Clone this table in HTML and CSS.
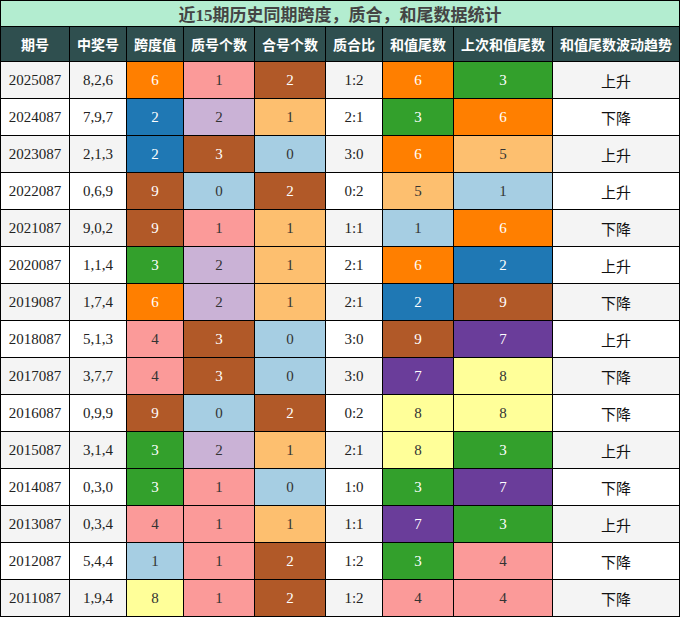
FILE: index.html
```html
<!DOCTYPE html>
<html lang="zh">
<head>
<meta charset="utf-8">
<link rel="stylesheet" href="styles.css">
</head>
<body>
<div class="grid">
  <div class="title">近15期历史同期跨度，质合，和尾数据统计</div>
  <div class="th">期号</div><div class="th">中奖号</div><div class="th">跨度值</div><div class="th">质号个数</div><div class="th">合号个数</div><div class="th">质合比</div><div class="th">和值尾数</div><div class="th">上次和值尾数</div><div class="th">和值尾数波动趋势</div>

  <div class="td g">2025087</div><div class="td g">8,2,6</div><div class="td c-or">6</div><div class="td c-pk">1</div><div class="td c-br">2</div><div class="td g">1:2</div><div class="td c-or">6</div><div class="td c-gr">3</div><div class="td g tr">上升</div>
  <div class="td">2024087</div><div class="td">7,9,7</div><div class="td c-bl">2</div><div class="td c-lp">2</div><div class="td c-lo">1</div><div class="td">2:1</div><div class="td c-gr">3</div><div class="td c-or">6</div><div class="td tr">下降</div>
  <div class="td g">2023087</div><div class="td g">2,1,3</div><div class="td c-bl">2</div><div class="td c-br">3</div><div class="td c-lb">0</div><div class="td g">3:0</div><div class="td c-or">6</div><div class="td c-lo">5</div><div class="td g tr">上升</div>
  <div class="td">2022087</div><div class="td">0,6,9</div><div class="td c-br">9</div><div class="td c-lb">0</div><div class="td c-br">2</div><div class="td">0:2</div><div class="td c-lo">5</div><div class="td c-lb">1</div><div class="td tr">上升</div>
  <div class="td g">2021087</div><div class="td g">9,0,2</div><div class="td c-br">9</div><div class="td c-pk">1</div><div class="td c-lo">1</div><div class="td g">1:1</div><div class="td c-lb">1</div><div class="td c-or">6</div><div class="td g tr">下降</div>
  <div class="td">2020087</div><div class="td">1,1,4</div><div class="td c-gr">3</div><div class="td c-lp">2</div><div class="td c-lo">1</div><div class="td">2:1</div><div class="td c-or">6</div><div class="td c-bl">2</div><div class="td tr">上升</div>
  <div class="td g">2019087</div><div class="td g">1,7,4</div><div class="td c-or">6</div><div class="td c-lp">2</div><div class="td c-lo">1</div><div class="td g">2:1</div><div class="td c-bl">2</div><div class="td c-br">9</div><div class="td g tr">下降</div>
  <div class="td">2018087</div><div class="td">5,1,3</div><div class="td c-pk">4</div><div class="td c-br">3</div><div class="td c-lb">0</div><div class="td">3:0</div><div class="td c-br">9</div><div class="td c-pu">7</div><div class="td tr">上升</div>
  <div class="td g">2017087</div><div class="td g">3,7,7</div><div class="td c-pk">4</div><div class="td c-br">3</div><div class="td c-lb">0</div><div class="td g">3:0</div><div class="td c-pu">7</div><div class="td c-ye">8</div><div class="td g tr">下降</div>
  <div class="td">2016087</div><div class="td">0,9,9</div><div class="td c-br">9</div><div class="td c-lb">0</div><div class="td c-br">2</div><div class="td">0:2</div><div class="td c-ye">8</div><div class="td c-ye">8</div><div class="td tr">下降</div>
  <div class="td g">2015087</div><div class="td g">3,1,4</div><div class="td c-gr">3</div><div class="td c-lp">2</div><div class="td c-lo">1</div><div class="td g">2:1</div><div class="td c-ye">8</div><div class="td c-gr">3</div><div class="td g tr">上升</div>
  <div class="td">2014087</div><div class="td">0,3,0</div><div class="td c-gr">3</div><div class="td c-pk">1</div><div class="td c-lb">0</div><div class="td">1:0</div><div class="td c-gr">3</div><div class="td c-pu">7</div><div class="td tr">下降</div>
  <div class="td g">2013087</div><div class="td g">0,3,4</div><div class="td c-pk">4</div><div class="td c-pk">1</div><div class="td c-lo">1</div><div class="td g">1:1</div><div class="td c-pu">7</div><div class="td c-gr">3</div><div class="td g tr">上升</div>
  <div class="td">2012087</div><div class="td">5,4,4</div><div class="td c-lb">1</div><div class="td c-pk">1</div><div class="td c-br">2</div><div class="td">1:2</div><div class="td c-gr">3</div><div class="td c-pk">4</div><div class="td tr">下降</div>
  <div class="td g">2011087</div><div class="td g">1,9,4</div><div class="td c-ye">8</div><div class="td c-pk">1</div><div class="td c-br">2</div><div class="td g">1:2</div><div class="td c-pk">4</div><div class="td c-pk">4</div><div class="td g tr">下降</div>
</div>
</body>
</html>
```

FILE: styles.css
```css
html, body {
  margin: 0;
  padding: 0;
  background: #fff;
}
.grid {
  width: 680px;
  box-sizing: border-box;
  display: grid;
  grid-template-columns: 68px 56px 56px 70px 70px 56px 70px 98px 126px;
  grid-template-rows: 25px 34px repeat(15, 36px);
  gap: 1px;
  padding: 1px;
  background: #000;
  font-family: "Liberation Serif", "Noto Sans CJK SC", serif;
}
.title {
  grid-column: 1 / -1;
  background: #b3edd0;
  color: #444;
  font-weight: bold;
  font-size: 17px;
  display: flex;
  align-items: center;
  justify-content: center;
}
.th {
  background: #2f4f4f;
  color: #fff;
  font-family: "Noto Sans CJK SC", sans-serif;
  font-weight: bold;
  font-size: 14px;
  display: flex;
  align-items: center;
  justify-content: center;
  white-space: nowrap;
}
.td {
  background: #fff;
  color: #222;
  font-size: 15px;
  display: flex;
  align-items: center;
  justify-content: center;
}
.td.g { background: #f4f4f4; }
.td.tr {
  font-family: "Noto Sans CJK SC", sans-serif;
  font-size: 15px;
  color: #111;
}
.c-or { background: #ff7f00 !important; color: #fff !important; }
.c-bl { background: #1f78b4 !important; color: #fff !important; }
.c-br { background: #b15928 !important; color: #fff !important; }
.c-gr { background: #33a02c !important; color: #fff !important; }
.c-pu { background: #6a3d9a !important; color: #fff !important; }
.c-pk { background: #fb9a99 !important; color: #333 !important; }
.c-lp { background: #cab2d6 !important; color: #333 !important; }
.c-lo { background: #fdbf6f !important; color: #333 !important; }
.c-lb { background: #a6cee3 !important; color: #333 !important; }
.c-ye { background: #ffff99 !important; color: #333 !important; }
```
